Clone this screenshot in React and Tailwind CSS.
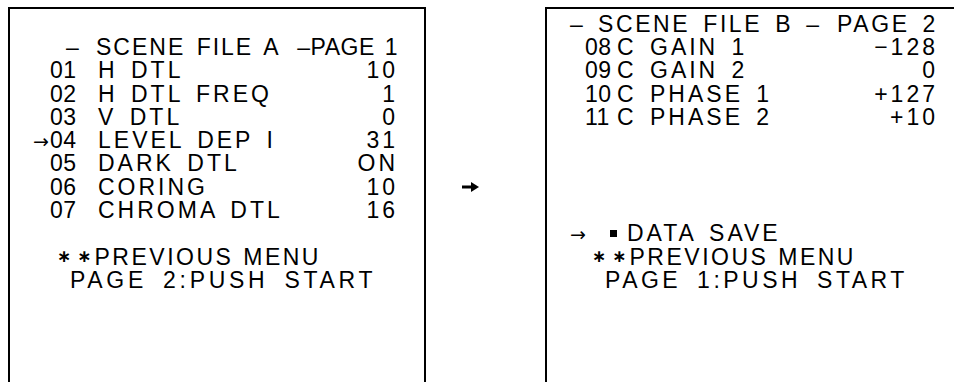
const LEFT_ROWS = [
  { no: '01', label: 'H DTL', value: '10' },
  { no: '02', label: 'H DTL FREQ', value: '1' },
  { no: '03', label: 'V DTL', value: '0' },
  { no: '04', label: 'LEVEL DEP I', value: '31', active: true },
  { no: '05', label: 'DARK DTL', value: 'ON' },
  { no: '06', label: 'CORING', value: '10' },
  { no: '07', label: 'CHROMA DTL', value: '16' },
];

const RIGHT_ROWS = [
  { no: '08', label: 'C GAIN 1', value: '−128' },
  { no: '09', label: 'C GAIN 2', value: '0' },
  { no: '10', label: 'C PHASE 1', value: '+127' },
  { no: '11', label: 'C PHASE 2', value: '+10' },
];

function Line({ className = '', children }) {
  return <div className={`flex h-[23.3px] items-center whitespace-pre ${className}`}>{children}</div>;
}

function Stars() {
  return (
    <span className="inline-flex shrink-0 gap-[6px] pr-[3px] font-['DejaVu_Sans',sans-serif] text-[17px] leading-[17px] font-bold tracking-normal">
      <span>∗</span>
      <span>∗</span>
    </span>
  );
}

function Arrow() {
  return <span className="font-['DejaVu_Sans',sans-serif] text-[19px] leading-[19px] tracking-normal">→</span>;
}

function Row({ row, arrowCol, noCol }) {
  return (
    <Line>
      <span className={`${arrowCol} shrink-0`}>{row.active ? <Arrow /> : ''}</span>
      <span className={`${noCol} shrink-0 tracking-[0.5px]`}>{row.no}</span>
      <span className="min-w-0 flex-1">{row.label}</span>
      <span className="shrink-0">{row.value}</span>
    </Line>
  );
}

export default function App() {
  return (
    <div className="flex h-[382px] w-[954px] overflow-hidden bg-white pt-[7px] font-['Liberation_Sans',Arial,sans-serif] text-[23px] leading-[22px] tracking-[3px] text-black [word-spacing:4px]">
      {/* Page 1 */}
      <div className="ml-[8px] w-[418px] shrink-0 border-x-2 border-t-2 border-black pt-[3px]">
        <Line />
        <Line className="pl-[56px] pr-[26px]">
          <span className="w-[30px] shrink-0">–</span>
          <span className="min-w-0 flex-1 tracking-[2px] [word-spacing:3px]">SCENE FILE A</span>
          <span className="shrink-0 tracking-[0.5px] [word-spacing:3px]">–PAGE 1</span>
        </Line>
        <div className="pl-[23px] pr-[26px]">
          {LEFT_ROWS.map((r) => (
            <Row key={r.no} row={r} arrowCol="w-[17px]" noCol="w-[48px]" />
          ))}
        </div>
        <Line />
        <Line className="pl-[47px] tracking-[2.5px] [word-spacing:1px]">
          <Stars />
          PREVIOUS MENU
        </Line>
        <Line className="pl-[60px] tracking-[3.7px] [word-spacing:6px]">PAGE 2:PUSH START</Line>
      </div>

      {/* arrow between pages */}
      <div className="w-[119px] shrink-0 pt-[175px] pl-[36px]">
        <svg width="17" height="10" viewBox="0 0 17 10">
          <rect x="0" y="3.5" width="10" height="3" fill="black" />
          <path d="M9 0 L17 5 L9 10 Z" fill="black" />
        </svg>
      </div>

      {/* Page 2 */}
      <div className="min-w-0 flex-1 border-l-2 border-t-2 border-black pt-[3px]">
        <Line className="pl-[23px] pr-[16px] tracking-[2.6px]">
          <span className="w-[28px] shrink-0">–</span>
          <span className="min-w-0 flex-1">SCENE FILE B –</span>
          <span className="shrink-0">PAGE 2</span>
        </Line>
        <div className="pl-[23px] pr-[16px]">
          {RIGHT_ROWS.map((r) => (
            <Row key={r.no} row={r} arrowCol="w-[15px]" noCol="w-[32px]" />
          ))}
        </div>
        <Line />
        <Line />
        <Line />
        <Line />
        <Line className="pl-[23px]">
          <span className="w-[40px] shrink-0">
            <Arrow />
          </span>
          <span className="mr-[10px] inline-block h-[7px] w-[7px] shrink-0 bg-black" />
          DATA SAVE
        </Line>
        <Line className="pl-[45px] tracking-[2.5px] [word-spacing:1px]">
          <Stars />
          PREVIOUS MENU
        </Line>
        <Line className="pl-[58px] tracking-[3.5px] [word-spacing:6px]">PAGE 1:PUSH START</Line>
      </div>
    </div>
  );
}
